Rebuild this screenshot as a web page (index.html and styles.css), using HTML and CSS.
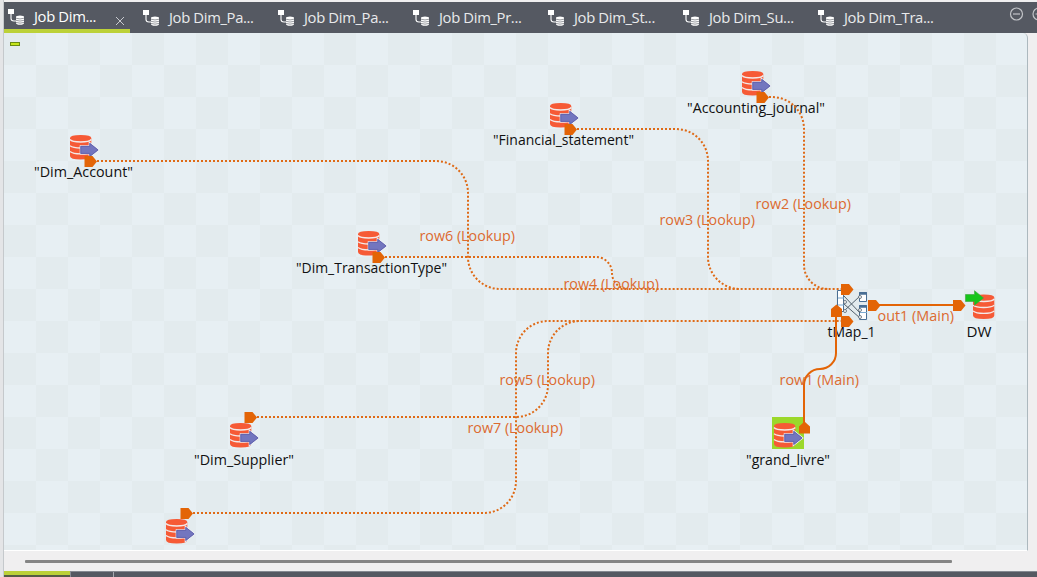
FILE: index.html
```
<!DOCTYPE html>
<html lang="en">
<head>
<meta charset="utf-8">
<title>Job designer</title>
<link rel="stylesheet" href="styles.css">
</head>
<body>
<svg class="defs" width="0" height="0">
  <defs>
    <g id="job" fill="#fff">
      <path d="M0 0h6v5H0z"/>
      <path d="M3 5v4.500q0 2.500 3 2.500h3" fill="none" stroke="#fff" stroke-width="1.100"/>
      <path d="M8 8q0-1.500 4-1.500T16 8v6q0 1.800-4 1.800T8 14z"/>
      <path d="M8 9.200q4 1.500 8 0M8 11.300q4 1.500 8 0M8 13.400q4 1.500 8 0" fill="none" stroke="#555962" stroke-width=".6"/>
    </g>
    <g id="cylinder">
      <path d="M0 3Q0 0 10.700 0T21.300 3V21Q21.300 24.500 10.700 24.500T0 21z" fill="#f65a36"/>
      <path d="M0 4.500Q2 7 10.700 7T21.300 4.500M0 10.700Q3 13 10.700 13T21.300 10.700M0 16.500Q3 18.900 10.700 18.900T21.300 16.500" fill="none" stroke="#f4e9e8" stroke-width="1.400"/>
    </g>
    <g id="input">
      <use href="#cylinder"/>
      <path d="M10.500 11h9V7.700l9 7.200-9 7.200v-3.400h-9z" fill="#7376bf" stroke="#eef0f6" stroke-width="1.600" paint-order="stroke"/>
      <path d="M10.800 11.300h9V8.400l8.200 6.500-8.200 6.500v-3h-9z" fill="#7376bf" stroke="#5f5faa" stroke-width=".8"/>
    </g>
    <path id="port" d="M0 0H8L12.500 5.500 8 11H0z" fill="#e36406"/>
  </defs>
</svg>
<main class="editor">
  <nav class="tabs">
    <div class="tab active"><svg class="job-icon" viewBox="0 0 16 16"><use href="#job"/></svg><span>Job Dim...</span><svg class="close" viewBox="0 0 8 8"><path d="M0 0L8 8M8 0L0 8"/></svg></div>
    <div class="tab"><svg class="job-icon" viewBox="0 0 16 16"><use href="#job"/></svg><span>Job Dim_Pa...</span></div>
    <div class="tab"><svg class="job-icon" viewBox="0 0 16 16"><use href="#job"/></svg><span>Job Dim_Pa...</span></div>
    <div class="tab"><svg class="job-icon" viewBox="0 0 16 16"><use href="#job"/></svg><span>Job Dim_Pr...</span></div>
    <div class="tab"><svg class="job-icon" viewBox="0 0 16 16"><use href="#job"/></svg><span>Job Dim_St...</span></div>
    <div class="tab"><svg class="job-icon" viewBox="0 0 16 16"><use href="#job"/></svg><span>Job Dim_Su...</span></div>
    <div class="tab"><svg class="job-icon" viewBox="0 0 16 16"><use href="#job"/></svg><span>Job Dim_Tra...</span></div>
    <svg class="window-controls" viewBox="0 0 28 14"><circle cx="7.500" cy="7" r="6"/><path d="M4 7h7"/><circle cx="30" cy="7" r="6"/><path d="M26.500 7h4"/></svg>
  </nav>
  <section class="canvas">
    <svg class="diagram" viewBox="4 33 1023 517">
      <rect x="10.500" y="42.500" width="9" height="3" fill="#c5e51c" stroke="#6b8c13"/>
      <use href="#input" x="70" y="135"/>
      <use href="#input" x="358" y="231"/>
      <use href="#input" x="550" y="103"/>
      <use href="#input" x="742" y="71"/>
      <use href="#input" x="230" y="423"/>
      <use href="#input" x="166" y="519"/>
      <path d="M772 417h32v32h-32z" fill="#9bd82b"/>
      <use href="#input" x="774" y="423"/>

      <g fill="none" stroke="#4a6f94" stroke-width="1">
        <g fill="#fff"><path d="M837.500 290.500h6v21h-6zM859.500 292.500h7v9h-7zM859.500 305.500h7v14h-7z"/></g>
        <path d="M859 293.500h8M859 306.500h8" stroke-width="2.500"/>
        <path d="M838 298h6M838 305h6M860 312.500h7" stroke="#7daad0"/>
        <path d="M844 296L860 313M844 304L860 318M844 311L860 296" stroke="#53616c"/>
        <g fill="#fff" stroke="#53616c" stroke-width=".8"><circle cx="845" cy="302" r="1.500"/><circle cx="845" cy="311" r="1.500"/><circle cx="860" cy="297" r="1.500"/><circle cx="860" cy="310" r="1.500"/><circle cx="860" cy="317" r="1.500"/></g>
      </g>
      <use href="#cylinder" x="973" y="294.500"/>
      <path d="M965.500 294.500h9v-3.800l9 7.300-9 7.300v-3.800h-9z" fill="#16c51b" stroke="#3aa33a" stroke-width=".6"/>

      <g class="names">
        <text x="34" y="177" textLength="99" lengthAdjust="spacingAndGlyphs">"Dim_Account"</text>
        <text x="296" y="273" textLength="151" lengthAdjust="spacingAndGlyphs">"Dim_TransactionType"</text>
        <text x="493" y="145" textLength="141" lengthAdjust="spacingAndGlyphs">"Financial_statement"</text>
        <text x="687" y="113" textLength="138" lengthAdjust="spacingAndGlyphs">"Accounting_journal"</text>
        <text x="194" y="465" textLength="100" lengthAdjust="spacingAndGlyphs">"Dim_Supplier"</text>
        <text x="746" y="465" textLength="84" lengthAdjust="spacingAndGlyphs">"grand_livre"</text>
        <text x="827.500" y="337" textLength="48" lengthAdjust="spacingAndGlyphs">tMap_1</text>
        <text x="966.500" y="337" textLength="25" lengthAdjust="spacingAndGlyphs">DW</text>
      </g>

      <g class="lookup">
        <path d="M97 161H436A32 32 0 0 1 468 193V257A32 32 0 0 0 500 289H842"/>
        <path d="M385 257H596A16 16 0 0 1 612 273A16 16 0 0 0 628 289"/>
        <path d="M577 129H676A32 32 0 0 1 708 161V257A32 32 0 0 0 740 289"/>
        <path d="M769 97H772A32 32 0 0 1 804 129V265A24 24 0 0 0 828 289"/>
        <path d="M257 417H516A32 32 0 0 0 548 385V353A32 32 0 0 1 580 321"/>
        <path d="M193 513H484A32 32 0 0 0 516 481V353A32 32 0 0 1 548 321H842"/>
      </g>
      <g class="main-flow">
        <path d="M804 424V385A16 16 0 0 1 820 369A16 16 0 0 0 836 353V315M879 305H954"/>
      </g>
      <use href="#port" x="84.500" y="156"/>
      <use href="#port" x="372.500" y="252"/>
      <use href="#port" x="564.500" y="124"/>
      <use href="#port" x="756.500" y="92"/>
      <use href="#port" x="244.500" y="412"/>
      <use href="#port" x="180.500" y="508"/>
      <use href="#port" x="841" y="284"/>
      <use href="#port" x="841" y="316"/>
      <use href="#port" x="868" y="300"/>
      <use href="#port" x="953" y="300"/>
      <path d="M831 317v-8l5.500-4.500 5.500 4.500v8zM799 433.500v-7l5.500-5 5.500 5v7z" fill="#e36406"/>

      <g class="links">
        <text x="419.500" y="241" textLength="95.500" lengthAdjust="spacingAndGlyphs">row6 (Lookup)</text>
        <text x="563.500" y="289" textLength="95.500" lengthAdjust="spacingAndGlyphs">row4 (Lookup)</text>
        <text x="659.500" y="225" textLength="95.500" lengthAdjust="spacingAndGlyphs">row3 (Lookup)</text>
        <text x="755.500" y="209" textLength="95.500" lengthAdjust="spacingAndGlyphs">row2 (Lookup)</text>
        <text x="499.500" y="385" textLength="95.500" lengthAdjust="spacingAndGlyphs">row5 (Lookup)</text>
        <text x="467.500" y="433" textLength="95.500" lengthAdjust="spacingAndGlyphs">row7 (Lookup)</text>
        <text x="779.500" y="385" textLength="79.500" lengthAdjust="spacingAndGlyphs">row1 (Main)</text>
        <text x="877.500" y="321" textLength="76.500" lengthAdjust="spacingAndGlyphs">out1 (Main)</text>
      </g>
    </svg>
  </section>
  <div class="scrollbar"><div class="thumb"></div></div>
  <footer class="bottom-tabs"><div class="bottom-active"></div><div class="bottom-tab"></div></footer>
</main>
</body>
</html>
```
FILE: styles.css
```
* { box-sizing: border-box; }
body { margin: 0; background: #e6e8ea; font-family: "Open Sans", "Noto Sans", sans-serif; overflow: hidden; }
.defs { display: block; }
.editor { display: flex; flex-direction: column; width: 1037px; height: 577px; padding: 2px 0 0 4px; background: linear-gradient(90deg, #e4e5e7 3px, #c5c9cc 3px, #c5c9cc 4px, #f0eff0 4px); }
.tabs { display: flex; flex: 0 0 31px; background: #555962; color: #e9eaec; font-size: 14.800px; overflow: hidden; }
.tab { display: flex; flex: 0 0 135px; align-items: center; padding: 0 0 0 9px; white-space: nowrap; }
.tab.active { flex-basis: 126px; padding: 3px 6px 0 4px; border-bottom: 4px solid #bcd138; color: #fff; }
.tab.active + .tab { flex-basis: 144px; padding-left: 13px; }
.tab.active + .tab ~ .tab { padding-left: 4px; }
.job-icon { flex: 0 0 16px; width: 16px; height: 16px; margin-right: 10px; overflow: visible; }
.tab span { padding-bottom: 2px; letter-spacing: -0.35px; }
.close { width: 8px; height: 8px; margin: 7px 0 0 auto; fill: none; stroke: #c8cacf; stroke-width: 1; overflow: visible; }
.window-controls { flex: 0 0 28px; height: 14px; margin: 4.500px 0 0 auto; fill: none; stroke: #c2c4c8; stroke-width: 1.200; }
.canvas { flex: 0 0 517px; width: 1024px; border-right: 1px solid #acb8be; border-top-right-radius: 5px; border-bottom: 1px solid #fff; background: repeating-conic-gradient(#e7eff3 0 25%, #e3ebee 0 50%) 0 0 / 64px 64px; }
.diagram { display: block; width: 1023px; height: 517px; }
.diagram text { font-family: "Open Sans", "Noto Sans", sans-serif; font-size: 15px; }
.names { fill: #101010; }
.links { fill: #dc6a30; }
.lookup { fill: none; stroke: #df6a16; stroke-width: 2; stroke-dasharray: 2 2; }
.main-flow { fill: none; stroke: #e36406; stroke-width: 2; }
.scrollbar { flex: 0 0 20px; display: flex; align-items: flex-start; padding: 9px 0 0 21px; }
.thumb { width: 927px; height: 3px; border-radius: 1px; background: #858585; }
.bottom-tabs { display: flex; flex: 0 0 7px; background: #555962; border-top: 1px solid #858991; }
.bottom-active { flex: 0 0 66px; margin-top: -1px; background: linear-gradient(#bcd138 4px, #555d45 4px); }
.bottom-tab { flex: 0 0 44px; border-left: 1px solid #888c94; border-right: 1px solid #a5a8af; }
```
